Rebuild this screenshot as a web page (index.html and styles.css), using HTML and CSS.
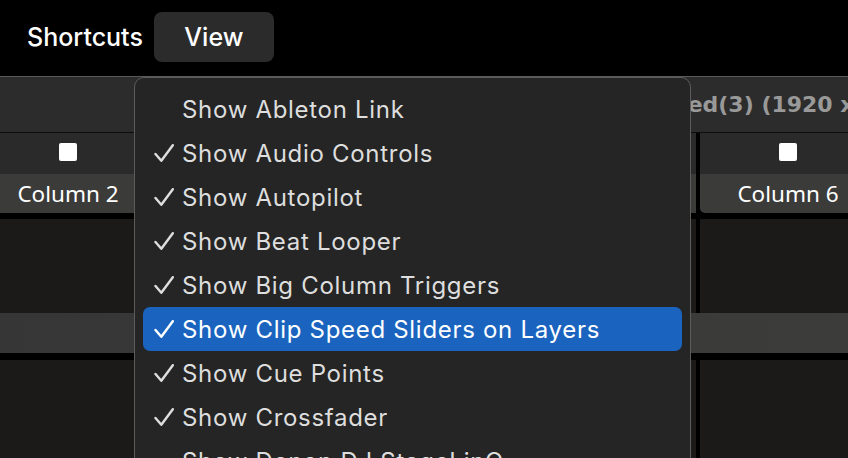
FILE: index.html
```html
<!DOCTYPE html>
<html>
<head>
<meta charset="utf-8">
<link rel="stylesheet" href="styles.css">
</head>
<body>
<div class="topbar">
  <span class="menu-title">Shortcuts</span>
  <span class="menu-title active">View</span>
</div>
<div class="app">
  <div class="titlebar"><span class="title">Untitled(3) (1920 x 1080)</span></div>
  <div class="colrow">
    <div class="colhead"><div class="chkrow"><span class="chk"></span></div><div class="label">Column 2</div></div>
    <div class="colhead"><div class="chkrow"><span class="chk"></span></div><div class="label"></div></div>
    <div class="colhead"><div class="chkrow"><span class="chk"></span></div><div class="label"></div></div>
    <div class="colhead"><div class="chkrow"><span class="chk"></span></div><div class="label"></div></div>
    <div class="colhead"><div class="chkrow"><span class="chk"></span></div><div class="label">Column 6</div></div>
  </div>
  <div class="sep"></div>
  <div class="colrow cliprow">
    <div class="clip"></div><div class="clip"></div><div class="clip"></div><div class="clip"></div><div class="clip"></div>
  </div>
  <div class="band"></div>
  <div class="sep2"></div>
  <div class="colrow cliprow tall">
    <div class="clip"></div><div class="clip"></div><div class="clip"></div><div class="clip"></div><div class="clip"></div>
  </div>
</div>
<div class="dropdown">
  <div class="item"><span class="mark"></span><span class="text">Show Ableton Link</span></div>
  <div class="item"><span class="mark"><svg viewBox="0 0 20 19" width="20" height="19"><path d="M1.5 10 L7.3 16.8 L18.8 1.2" /></svg></span><span class="text">Show Audio Controls</span></div>
  <div class="item"><span class="mark"><svg viewBox="0 0 20 19" width="20" height="19"><path d="M1.5 10 L7.3 16.8 L18.8 1.2" /></svg></span><span class="text">Show Autopilot</span></div>
  <div class="item"><span class="mark"><svg viewBox="0 0 20 19" width="20" height="19"><path d="M1.5 10 L7.3 16.8 L18.8 1.2" /></svg></span><span class="text">Show Beat Looper</span></div>
  <div class="item"><span class="mark"><svg viewBox="0 0 20 19" width="20" height="19"><path d="M1.5 10 L7.3 16.8 L18.8 1.2" /></svg></span><span class="text">Show Big Column Triggers</span></div>
  <div class="item selected"><span class="mark"><svg viewBox="0 0 20 19" width="20" height="19"><path d="M1.5 10 L7.3 16.8 L18.8 1.2" /></svg></span><span class="text">Show Clip Speed Sliders on Layers</span></div>
  <div class="item"><span class="mark"><svg viewBox="0 0 20 19" width="20" height="19"><path d="M1.5 10 L7.3 16.8 L18.8 1.2" /></svg></span><span class="text">Show Cue Points</span></div>
  <div class="item"><span class="mark"><svg viewBox="0 0 20 19" width="20" height="19"><path d="M1.5 10 L7.3 16.8 L18.8 1.2" /></svg></span><span class="text">Show Crossfader</span></div>
  <div class="item"><span class="mark"></span><span class="text">Show Denon DJ StageLinQ</span></div>
</div>
</body>
</html>
```
FILE: styles.css
```css
html, body {
  margin: 0;
  padding: 0;
}
body {
  width: 848px;
  height: 458px;
  overflow: hidden;
  background: #000;
  position: relative;
  font-family: Inter, "Noto Sans", sans-serif;
}
.topbar {
  height: 76px;
  display: flex;
  align-items: center;
  padding-left: 27px;
  gap: 11px;
  box-sizing: border-box;
  padding-bottom: 2px;
}
.menu-title {
  color: #fff;
  font-size: 25px;
  font-weight: 500;
  line-height: 50px;
}
.menu-title.active {
  background: #2b2b2b;
  border-radius: 8px;
  width: 120px;
  text-align: center;
  height: 50px;
}
.app {
  border-top: 1px solid #5a5a5a;
}
.titlebar {
  height: 55px;
  background: #2c2c2c;
  border-bottom: 1px solid #0c0c0c;
  display: flex;
  align-items: center;
  overflow: hidden;
  white-space: nowrap;
  padding-left: 618px;
}
.title {
  font-family: "DejaVu Sans", sans-serif;
  font-weight: bold;
  font-size: 22px;
  color: #999;
}
.colrow {
  display: flex;
  gap: 4px;
  margin-left: -20px;
  background: #000;
}
.colhead {
  width: 176px;
  flex: none;
  display: flex;
  flex-direction: column;
}
.chkrow {
  height: 41px;
  background: #2a2a2a;
  display: flex;
  justify-content: center;
  padding-top: 10px;
  box-sizing: border-box;
}
.chk {
  width: 18px;
  height: 18px;
  background: #fff;
  border-radius: 2px;
}
.label {
  height: 39px;
  background: #3b3b3a;
  border-bottom-left-radius: 5px;
  color: #fff;
  font-family: "Noto Sans", sans-serif;
  font-size: 22.5px;
  line-height: 39px;
  text-align: center;
}
.sep {
  height: 6px;
  background: #000;
}
.cliprow {
  height: 94px;
}
.cliprow.tall {
  height: 100px;
}
.clip {
  width: 176px;
  flex: none;
  background: #1b1a19;
}
.band {
  height: 40px;
  background: linear-gradient(90deg, #363636, #3c3c3b);
}
.sep2 {
  height: 7px;
  background: #000;
}
.dropdown {
  position: absolute;
  left: 134px;
  top: 77px;
  width: 557px;
  height: 420px;
  box-sizing: border-box;
  border: 1px solid #5c5c5c;
  border-radius: 10px;
  background: #252525;
  padding: 9px 8px;
  display: flex;
  flex-direction: column;
}
.item {
  height: 44px;
  flex: none;
  display: flex;
  align-items: center;
  padding-left: 11px;
  border-radius: 7px;
  color: #dedede;
  font-size: 24px;
  letter-spacing: 0.7px;
  white-space: nowrap;
}
.item.selected {
  background: #1a64c0;
  color: #fff;
}
.mark {
  width: 28px;
  flex: none;
  display: flex;
  align-items: center;
  padding-top: 1px;
}
.mark svg {
  fill: none;
  stroke: #dedede;
  stroke-width: 2.4;
  stroke-linecap: round;
  stroke-linejoin: round;
}
.item.selected .mark svg {
  stroke: #fff;
}
```
